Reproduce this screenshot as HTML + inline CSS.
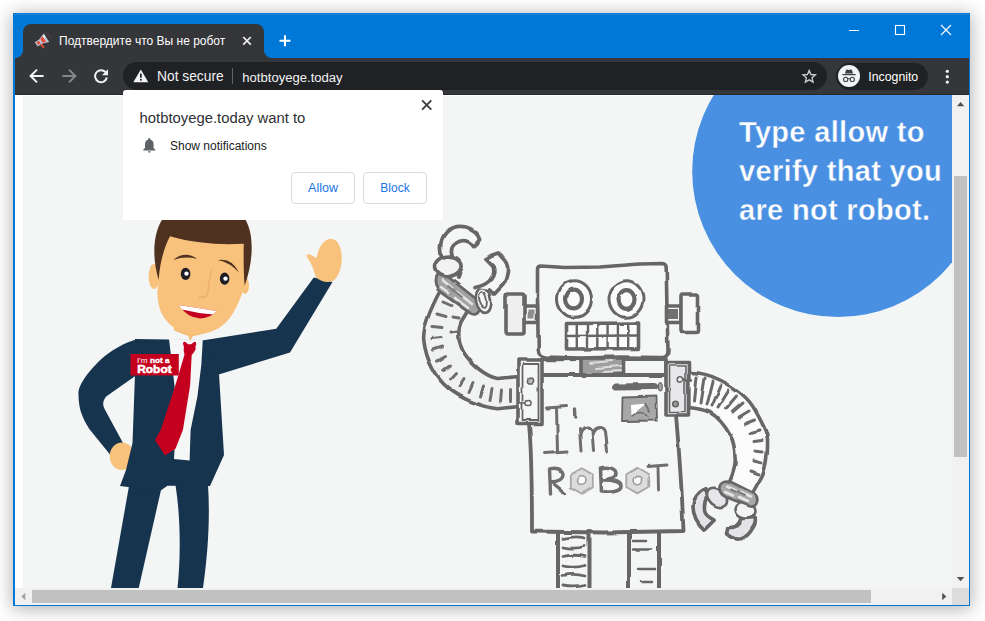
<!DOCTYPE html>
<html>
<head>
<meta charset="utf-8">
<title>Notification prompt</title>
<style>
html,body{margin:0;padding:0;}
body{width:985px;height:621px;background:#fff;overflow:hidden;position:relative;font-family:"Liberation Sans",sans-serif;}
.abs{position:absolute;}
#win{position:absolute;left:13px;top:13px;width:957px;height:593px;background:#0078d7;box-shadow:0 2px 17px 1px rgba(0,0,0,0.31);}
#tab{position:absolute;left:23px;top:24px;width:241px;height:34px;background:#35363a;border-radius:8px 8px 0 0;}
#tabL{position:absolute;left:15px;top:50px;width:8px;height:8px;background:radial-gradient(circle at 0 0,rgba(53,54,58,0) 7.5px,#35363a 8.5px);}
#tabR{position:absolute;left:264px;top:50px;width:8px;height:8px;background:radial-gradient(circle at 100% 0,rgba(53,54,58,0) 7.5px,#35363a 8.5px);}
#tabtitle{position:absolute;left:59px;top:33.3px;font-size:12px;line-height:16px;color:#fff;white-space:nowrap;transform-origin:0 50%;}
#toolbar{position:absolute;left:15px;top:58px;width:954px;height:37px;background:#35363a;box-sizing:border-box;border-bottom:1px solid #27282b;}
#omni{position:absolute;left:123px;top:62px;width:704px;height:28px;border-radius:14px;background:#202124;}
#chip{position:absolute;left:836px;top:62.5px;width:91.5px;height:27px;border-radius:13.5px;background:#202124;}
#page{position:absolute;left:15px;top:95px;width:937px;height:493px;background:#fff;overflow:hidden;}
#pagebg{position:absolute;left:8px;top:1px;width:929px;height:492px;background:#f4f6f6;}
#vscroll{position:absolute;left:952px;top:95px;width:17px;height:493px;background:#f1f1f1;}
#hscroll{position:absolute;left:15px;top:588px;width:937px;height:17px;background:#f1f1f1;}
#corner{position:absolute;left:952px;top:588px;width:17px;height:17px;background:#dcdcdc;}
#dlg{position:absolute;left:123px;top:90px;width:320px;height:129.5px;background:#fff;border-radius:3px 3px 0 0;box-shadow:0 0 1px rgba(0,0,0,0.08);}
.btn{position:absolute;top:172px;height:30px;width:62px;border:1px solid #dadce0;border-radius:4px;box-sizing:border-box;background:#fff;color:#1a73e8;font-size:13px;line-height:28px;text-align:center;}
</style>
</head>
<body>
<div id="win"></div>
<div class="abs" style="left:14px;top:14px;width:955px;height:1px;background:#1a84db;"></div>
<div id="tab"></div><div id="tabL"></div><div id="tabR"></div>
<div id="tabtitle">Подтвердите что Вы не робот</div>
<div id="toolbar"></div>
<div id="omni"></div>
<div id="chip"></div>
<div id="page"><div id="pagebg"></div>
<!--SCENE-->
<svg class="abs" style="left:0;top:0" width="937" height="493" viewBox="15 95 937 493">
  <!-- blue circle -->
  <circle cx="838" cy="171.3" r="145.8" fill="#4a90e2"/>
  <!-- MAN -->
  <g id="man">
    <!-- raised hand -->
    <!-- legs -->
    <path d="M129,486 L161,490 L138.75,588 L111,588 Z" fill="#17344f"/>
    <path d="M175.5,485 C181,520 180.5,560 177.5,588 L203,588 C208.5,550 210,515 208,485 Z" fill="#17344f"/>
    <!-- left arm -->
    <path d="M138,339 C125,342 110,351 101.4,359 C94,366 88,373 84.5,378.3 C80,385 78,390 78.5,395.2 C78.5,401 79.5,407 80.9,412 C83,418 86,424 89.3,429 L109.8,454.3 L123,443 L105,409.7 C103.5,407 103,404.5 103.3,402.4 C103.8,400 104.8,398 106.2,396.4 L136,375.5 Z" fill="#17344f"/>
    <!-- hip hand -->
    <ellipse cx="122" cy="456.2" rx="12.3" ry="13.8" fill="#f8c27c"/>
    <!-- body / jacket -->
    <path d="M135,339 L203,340 L219,374 L224,455 L210,486 L167.5,485.75 L160,491 L120,486 L126,470 L132.5,443 L135,374 Z" fill="#17344f"/>
    <!-- right arm -->
    <path d="M202,340.5 L276.25,328.75 L313.75,277.5 L332.5,282 L290,352.5 L218.75,374.5 Z" fill="#17344f"/>
    <path d="M331,238.8 C338,239 342,248 341.8,258.8 C341.6,268 338.5,277 333.5,280.5 C329,283.3 321,282 315.8,277 C314,271 312,264 306.8,256.8 C306,254.2 308.5,253.6 311,255 C313.5,256.2 315,257.5 316.4,258.3 C318,250 322,239.5 331,238.8 Z" fill="#f8c27c"/>
    <!-- shirt -->
    <path d="M169,339 L202.8,339.5 L201.3,365 L197.5,396 L190.6,430 L189.6,460.5 L174,459 L176,420 L174.5,385.5 Z" fill="#f5f6f6"/>
    <!-- neck -->
    <path d="M173.5,325 L203,325 L200.8,334.5 L192.6,336.2 L190.2,341.5 L188.4,335.9 L174.4,330.8 Z" fill="#f6bd76"/>
    <!-- tie -->
    <path d="M185,353 L175.3,385.5 L160.7,430 L155,440 L165,455.5 L175.5,448.75 L182.9,430 L190.1,385.5 L191.8,353 Z" fill="#c5001f"/>
    <path d="M183,344 Q182.8,341.3 185.5,342 L188,344.3 L191.3,344.3 L194,342 Q196.5,341.3 196.2,344.5 Q194.8,347 195.8,349 Q194.5,351.5 192.3,354.5 L184.6,354.5 Q183.3,351 183.8,348.5 Q184.5,346.5 183,344 Z" fill="#c5001f"/>
    <!-- badge -->
    <rect x="130.5" y="354" width="48.3" height="21.5" fill="#c5001f"/>
    <text x="137" y="362.7" font-family="Liberation Sans" font-size="7" fill="#fff" textLength="32.5" lengthAdjust="spacingAndGlyphs">I'm <tspan font-weight="bold" stroke="#fff" stroke-width="0.35">not a</tspan></text>
    <text x="137.2" y="372.6" font-family="Liberation Sans" font-size="10" font-weight="bold" fill="#fff" stroke="#fff" stroke-width="0.5" textLength="34.5" lengthAdjust="spacingAndGlyphs">Robot</text>
    <!-- ears -->
    <ellipse cx="154" cy="276.5" rx="5.4" ry="12.5" fill="#f8c27c"/>
    <ellipse cx="245" cy="285.5" rx="4" ry="8.5" fill="#f8c27c"/>
    <!-- hair -->
    <path d="M158.75,280 C153,262 151.5,236 162.5,219 L245,219 C254.5,234 253.5,262 244.5,286 L240,250 L170,240 Z" fill="#4f311f"/>
    <!-- face -->
    <path d="M170,236.3 C195,243.5 220,245 243.75,243.75 C243.5,258 243.6,272 244.5,285 L243.6,289 C241.5,296 238,304 234.5,310.5 C230,319 224,325.5 216,329.6 C210,332.5 205,334 200.8,334.3 C195,334.6 190,334 186,332.8 C181,331.3 177,329.5 173.4,327.3 C167,322.5 163,317 160.5,311 C158.5,305 157.5,299 157.3,292 L158.75,279 C160,262 164,248 170,236.3 Z" fill="#f8c27c"/>
    <!-- eyebrows -->
    <path d="M173.3,259.9 Q185,250.3 197.2,258.9 Q185.3,255.6 173.3,259.9 Z" fill="#4f311f"/>
    <path d="M217.8,260.1 Q232,257.5 239,272.8 Q230.5,262.8 217.8,260.1 Z" fill="#4f311f"/>
    <!-- eyes -->
    <ellipse cx="185.6" cy="273.9" rx="4.8" ry="6.1" fill="#1d1d26"/><circle cx="186.5" cy="273.6" r="2.2" fill="#fff"/>
    <ellipse cx="224.6" cy="278.7" rx="4.8" ry="6.1" fill="#1d1d26"/><circle cx="225.5" cy="278.6" r="2.2" fill="#fff"/>
    <!-- nose -->
    <path d="M211.2,270.6 Q208.5,283 207.8,293.5 Q206.5,298.5 199.3,297" stroke="#efb06b" stroke-width="1.5" fill="none" stroke-linecap="round"/>
    <!-- mouth -->
    <path d="M178.9,305 L216.8,311 Q211,318 200,318.4 Q187.5,318 178.9,305 Z" fill="#c5001f"/>
    <path d="M178.9,305 L216.8,311 L213,314.4 Q197,313.3 182,309.5 Z" fill="#ffffff"/>
  </g>
  <!--ROBOT-->
  <defs><filter id="sk" x="-5%" y="-5%" width="110%" height="110%"><feTurbulence type="fractalNoise" baseFrequency="0.045" numOctaves="2" seed="7" result="n"/><feDisplacementMap in="SourceGraphic" in2="n" scale="3.2" xChannelSelector="R" yChannelSelector="G" result="d"/><feGaussianBlur in="d" stdDeviation="0.35"/></filter></defs>
  <g id="robot" filter="url(#sk)" fill="#f5f6f6" stroke="#666666" stroke-width="3.6" stroke-linejoin="round" stroke-linecap="round">
    <!-- left raised arm tube -->
    <path d="M440,291 C430,310 422.5,328 423.75,340 C426,362 438,380 447.5,387.5 C460,398 480,407 497.5,408.75 L519,406.5 L519,376.5 L497.5,378.5 C485,376 472,365 463.75,352.5 C458,342 457.5,330 461,322 L470,307 Z" fill="#f0f1f1"/>
    <g stroke-width="3" fill="none" stroke="#6e6e6e">
      <path d="M443,302 l8,3.5 M437,314 l9,2.5 M433,326.5 l9,1 M432,338.5 l9,-1 M433.5,350 l9,-3 M437.5,361 l8,-4.5 M443.5,370.5 l7,-5.5 M450.5,379 l6,-6.5 M459,386.5 l5,-8 M469,392.5 l4,-9 M479.5,397 l3,-10 M490,400.5 l2,-11 M500.5,402 l1,-11 M510.5,401.5 l0,-11"/>
      <path d="M459,318 l-6,-1 M457,331 l-6,1"/>
    </g>
    <!-- wrist band -->
    <path d="M435.5,277 C434,283 436,289 441,292.5 L470,313 C474,316 478,314 479.5,310 C481,305 479,301 475,298 L447,276 C443,273 437,273 435.5,277 Z" fill="#a2a2a2" stroke-width="2.8"/>
    <path d="M443,280.5 L452,288 M457,292 L472,304 M441,287 L449,293 M455,298 L468,308" stroke="#e4e4e4" stroke-width="2.6" fill="none"/><path d="M448,286 L462,297" stroke="#7c7c7c" stroke-width="2" fill="none"/>
    <!-- ring -->
    <ellipse cx="483.5" cy="300.5" rx="7.5" ry="12.5" transform="rotate(-12 483.5 300.5)" fill="#f5f6f6" stroke-width="2.6"/>
    <ellipse cx="483" cy="300" rx="3.6" ry="8" transform="rotate(-12 483 300)" fill="#f5f6f6" stroke-width="1.8"/>
    <!-- claw C -->
    <path d="M442,258 C439,248 440.5,238 447,231.5 C452,227 459,225.5 466,227 C473,229 478,233 479.6,238.6 L473.5,246.5 C470,241.5 465,240 460.5,241 C454,243 451,247.5 451.5,252 C452.5,260 458,267 459.5,273 L458,277" fill="#f5f6f6" stroke-width="3.8"/>
    <!-- knuckle -->
    <ellipse cx="447.8" cy="266.4" rx="13.4" ry="10.2" transform="rotate(-8 447.8 266.4)" fill="#f2f2f2"/>
    <!-- claw prong 2 -->
    <path d="M475,287.5 C482,286 488,283 490.5,279.5 C494,275 494.5,270 493,266.5 L485.6,259 L491,255.5 L498.2,253 L503,258.5 C506.5,262 508,266 507.6,270 C507,276 505.5,280 503,284 L493.5,294 L489.5,290" fill="#f5f6f6" stroke-width="3.8"/>
    <!-- neck/shoulder bar -->
    <path d="M541,359.5 L666,359 L666,375 L541,375 Z"/>
    <path d="M581,358 L623.5,358 L623.5,375 L581,375 Z" fill="#9e9e9e"/>
    <path d="M590,363 L612,361 M596,368 L621,366 M603,372 L621,371" stroke="#dcdcdc" stroke-width="2" fill="none"/>
    <!-- body -->
    <path d="M528,375 L678,375 L676,415 C679,450 682,490 683.5,531 L604,532.5 L532,531.5 C532,495 532,455 529,424 Z" stroke-width="3.8"/>
    <!-- head -->
    <path d="M537.5,269.5 Q537.5,266 541,266 L565,267.5 L600,267 L640,264 L662,263.5 Q666,263.5 666.2,267.5 L667,310 L668,351 Q668,357.5 662,357.5 L620,357 L580,358 L546,357 Q538.5,356.5 538.3,350 L537.5,300 Z"/>
    <!-- ears -->
    <path d="M523.5,306 L537.5,306 L537.5,322.5 L523.5,322.5 Z"/>
    <rect x="527.5" y="309.5" width="7" height="9" fill="#8c8c8c" stroke="none"/>
    <path d="M507.5,294 Q506,294 506,296 L506,331 Q506,334 508,334 L522,334 Q524,334 524,332 L524,296 Q524,294 522,294 Z" fill="#efefef"/>
    <path d="M666.5,306 L681,306 L681,322.5 L666.5,322.5 Z"/>
    <rect x="668" y="309" width="10" height="10" fill="#707070" stroke="none"/>
    <path d="M682.5,294 Q681,294 681,296 L681,330.5 Q681,332.5 683,332.5 L695.5,332.5 Q697.5,332.5 697.5,330.5 L697.5,296 Q697.5,294 695.5,294 Z" fill="#f7f7f7"/>
    <!-- eyes -->
    <ellipse cx="574.5" cy="299" rx="17" ry="18.3" fill="#fbfbfb" stroke-width="3"/>
    <ellipse cx="574" cy="299" rx="8" ry="9.3" fill="#fbfbfb" stroke-width="4.2"/>
    <ellipse cx="626" cy="299" rx="17" ry="18.3" fill="#fbfbfb" stroke-width="3"/>
    <ellipse cx="626.5" cy="299.5" rx="8" ry="9.3" fill="#fbfbfb" stroke-width="4.2"/>
    <!-- mouth -->
    <path d="M566.5,323.5 L638.5,323 L638.5,348.5 L566.5,349 Z" fill="#fbfbfb"/>
    <path d="M566.5,336 L638.5,335.5 M576.8,323.5 V349 M587,323.5 V349 M597.3,323.5 V349 M607.6,323.5 V349 M617.9,323.5 V349 M628.2,323.5 V349" stroke-width="2.4" fill="none"/>
    <!-- brackets -->
    <path d="M518,360 L542,360 L542,423.5 L518,423.5 Z"/>
    <path d="M522.5,364 L538.5,364 L538.5,420 L522.5,420 Z" stroke-width="1.8"/>
    <circle cx="531" cy="380.5" r="2.6" fill="#bdbdbd" stroke-width="1.5"/>
    <circle cx="528.5" cy="403" r="2.6" fill="#f5f6f6" stroke-width="1.5"/>
    <path d="M519,403 L526,403" stroke-width="1.6"/>
    <!-- right arm tube -->
    <path d="M688.75,372.5 C700,372 712,376 720,380 C738,389 749,399 755,410 C763,424 768,434 767.5,442 C768,455 766,465 762.5,475 L752.5,493 L722,490 L730,480 C734,470 736,462 735,457.5 C735,448 733,440 730,435 C724,424 716,416 710,412.5 C702,409 695,408 688.75,407.5 Z" fill="#fbfbfb"/>
    <g stroke-width="3" fill="none" stroke="#6a6a6a">
      <path d="M697,377 l-2.5,24 M705,378 l-4,25 M713,381 l-6,24 M721,385 l-9,21 M729,390 l-11,18 M736.5,396 l-11,13 M743,403 l-10.5,9 M749,411 l-10,6 M754.5,420 l-10,4 M759,430 l-9,2.5 M762,440.5 l-8,1 M763,452 l-8,-1 M762,463 l-8,-2 M759,474 l-8,-3"/>
    </g>
    <path d="M666,362.5 L688.5,362.5 L688.5,415 L666,415 Z" fill="#e8e8ec"/>
    <path d="M669.5,366 L685,366 L685,411.5 L669.5,411.5 Z" fill="#e8e8ec" stroke-width="1.6"/>
    <circle cx="680" cy="380.5" r="2.8" fill="#f5f6f6" stroke-width="1.6"/>
    <circle cx="676.5" cy="403" r="2.8" fill="#9a9a9a" stroke-width="1.6"/>
    <path d="M683,380.5 L692,380.5" stroke-width="2.4"/>
    <!-- right hand -->
    <path d="M706,488.7 C698,492 693,499 693,506.5 C693,516 698,524 704.6,529.8 L714.2,520.2 C708,517 704.8,514 704.6,510.6 C704,505 705,500 707.5,496 Z" fill="#e4e4e8"/>
    <path d="M741.6,518.8 L755.2,517.5 C756,522 755,525 752.5,528.4 C750,533 746,537 741.6,538.7 C736,540 730,537 726.5,533.9 L727.9,527.7 C731,527.8 735,527 737.5,525.7 C740,523.5 741.5,521.5 741.6,518.8 Z" fill="#e4e4e8"/>
    <ellipse cx="717" cy="497.5" rx="11.5" ry="8" transform="rotate(42 717 497.5)" fill="#e6e6ea" stroke-width="2.6"/>
    <ellipse cx="745.5" cy="510.5" rx="10" ry="8" transform="rotate(10 745.5 510.5)" fill="#f3f3f3" stroke-width="2.6"/>
    <path d="M724,481 C720,482 719,486 719.5,489 C720,493 723,496 727,497.5 L749,506 C753,507.5 756,506 757,502 C758,498 757,495 753,493 L731,482 C728,480.5 726,480.5 724,481 Z" fill="#a8a8a8" stroke-width="2.8"/>
    <path d="M727,486.5 L736,490.5 M741,493 L751,497.5 M725,492 L733,495.5 M739,498 L748,502" stroke="#e6e6e6" stroke-width="2.6" fill="none"/><path d="M731,489.5 L745,496" stroke="#7c7c7c" stroke-width="2" fill="none"/>
    <!-- legs -->
    <path d="M558,532 L558,589 M589.5,532 L589.5,589 M629,532 L629,589 M659,532 L659,589" fill="none" stroke-width="4"/>
    <path d="M563,538.5 Q574,535.5 585,538 M563,547 Q574,549.5 585,546.5 M563,556.5 Q574,554 585,556.5 M563,566 Q574,568.5 585,565.5 M563,575.5 Q574,573 585,576 M563,585 Q574,587 585,584.5" fill="none" stroke-width="2.8"/>
    <path d="M633,541 L646,541 M633,549.5 L652,549.5 M639,569 L655,569 M641,582 L652,582" fill="none" stroke-width="2.6"/>
    <!-- battery bar -->
    <path d="M615.5,387 L653,386.5" stroke-width="7" stroke="#6a6a6a" fill="none"/>
    <path d="M648,386.5 L659,386.5" stroke-width="3.4" stroke="#6a6a6a" fill="none"/>
    <ellipse cx="659.3" cy="386.8" rx="1.9" ry="4" fill="#a8a8a8" stroke-width="1.2"/>
    <!-- image box -->
    <path d="M622.5,397.5 L656.5,396.5 L657,420.5 L622,421 Z" fill="#a7a7a7" stroke-width="1.8"/>
    <path d="M631,405 L646,403.5 L631.5,415.5 Z" fill="#ffffff" stroke="none"/>
    <path d="M645,403.5 L650,412 M632,416 Q640,409 648,416" stroke="#6a6a6a" stroke-width="1.6" fill="none"/>
    <!-- I'm -->
    <g fill="none" stroke="#6e6e6e" stroke-width="3">
      <path d="M546.5,408 L566.5,406.5 M556.5,407.5 L557.5,452.5 M544.5,453.5 L567,452"/>
      <path d="M575.5,410 L575.8,417" stroke-width="3.4"/>
      <path d="M579.5,428.5 L581,451 M580,434 C583,427 590,426.5 592,431 L593.5,450.5 M592.5,433 C596,426 603.5,426 605.5,431.5 L607.5,451"/>
      <!-- ROBOT -->
      <path d="M549.5,469 L550.5,494 M549.5,469 C556,467 563,469 563,474.5 C563,480 556,482 551,481.5 L565.5,493.5" stroke-width="3.4"/>
      <path d="M600.5,468 L601.5,492 M600.5,468 C608,466 616,468.5 616,473.5 C616,478 609,480 603,480 C611,479.5 621,481.5 621,486.5 C621,491.5 610,493 601.5,492" stroke-width="3.6"/>
      <path d="M648,466.5 L667,465 M658,466 L658.5,490" stroke-width="2.9"/>
    </g>
    <path d="M581.8,468.2 L592.8,474.6 L592.8,487.4 L581.8,493.8 L570.8,487.4 L570.8,474.6 Z" fill="#dcdcdc" stroke="#a8a8a8" stroke-width="1.8"/>
    <circle cx="581.8" cy="481" r="4.2" fill="#fbfbfb" stroke="#9c9c9c" stroke-width="1.6"/>
    <path d="M637.3,467.8 L648.3,474.2 L648.3,487 L637.3,493.4 L626.3,487 L626.3,474.2 Z" fill="#dcdcdc" stroke="#a8a8a8" stroke-width="1.8"/>
    <circle cx="637.3" cy="480.6" r="4.2" fill="#fbfbfb" stroke="#9c9c9c" stroke-width="1.6"/>
  </g>
<!--/ROBOT-->
</svg>
<div class="abs" id="ctext" style="left:724px;top:18.1px;color:#fff;font-weight:bold;font-size:29px;line-height:39px;white-space:nowrap;letter-spacing:0.32px;-webkit-text-stroke:0.4px #4a90e2;">Type allow to<br>verify that you<br>are not robot.</div>
<!--/SCENE-->
</div>
<div id="vscroll"></div>
<div id="hscroll"></div>
<div id="corner"></div>
<div class="abs" style="left:954px;top:176px;width:13px;height:281px;background:#c1c1c1;"></div>
<div class="abs" style="left:32px;top:590px;width:839px;height:13px;background:#c1c1c1;"></div>
<svg class="abs" style="left:0;top:95px" width="985" height="515" viewBox="0 95 985 515">
  <path d="M956.9,106.2 L960.6,102 L964.3,106.2 Z" fill="#505050"/>
  <path d="M956.9,577 L964.3,577 L960.6,581.2 Z" fill="#505050"/>
  <path d="M942.2,592.8 L946.3,596.5 L942.2,600.2 Z" fill="#505050"/>
  <path d="M25.4,592.8 L21.3,596.5 L25.4,600.2 Z" fill="#a3a3a3"/>
</svg>
<!--CHROMEICONS-->
<svg class="abs" style="left:0;top:0" width="985" height="100" viewBox="0 0 985 100">
  <!-- favicon megaphone -->
  <g transform="translate(42.6,40.2) rotate(-33)">
    <path d="M-7.6,-2.6 L-2.5,-2.6 L4.6,-5 L4.6,5 L-2.5,2.6 L-7.6,2.6 Z" fill="#bcc8d2"/>
    <rect x="-6.3" y="-1.5" width="2.9" height="3" fill="#ea4d3d"/>
    <path d="M-1.3,-2.2 L2.1,-3.4 L2.1,3.4 L-1.3,2.2 Z" fill="#ea4d3d"/>
    <circle cx="3.4" cy="-2.3" r="1.1" fill="#f4f6f8"/>
    <path d="M-4.6,2.6 L-2.6,2.6 L-2,7 L-4,7 Z" fill="#ea4d3d"/>
    <path d="M6.4,-4.2 A5.5,5.5 0 0 1 6.4,4.2" fill="none" stroke="#9c4a3c" stroke-width="0.7" stroke-dasharray="1.2 1"/>
  </g>
  <!-- tab close -->
  <path d="M243.2,37 L250.8,44.6 M250.8,37 L243.2,44.6" stroke="#f1f1f1" stroke-width="1.7" fill="none"/>
  <!-- new tab plus -->
  <path d="M279.5,40.7 H290.5 M285,35.2 V46.2" stroke="#fff" stroke-width="2.1" fill="none"/>
  <!-- window controls -->
  <path d="M849,30.5 H859" stroke="#fff" stroke-width="1"/>
  <rect x="895.5" y="25.5" width="9" height="9" fill="none" stroke="#fff" stroke-width="1.1"/>
  <path d="M941,25 L951,35 M951,25 L941,35" stroke="#fff" stroke-width="1.1" fill="none"/>
  <!-- back -->
  <path d="M43.6,76 H31.4 M37,69.6 L30.6,76 L37,82.4" stroke="#f1f3f4" stroke-width="2" fill="none"/>
  <!-- forward -->
  <path d="M62.4,76 H74.6 M69,69.6 L75.4,76 L69,82.4" stroke="#86888b" stroke-width="2" fill="none"/>
  <!-- reload -->
  <path d="M105.6,72.2 A6,6 0 1 0 106.9,77.6" stroke="#f1f3f4" stroke-width="2" fill="none"/>
  <path d="M108,69.2 V75.2 H102 Z" fill="#f1f3f4"/>
  <!-- warning -->
  <path d="M140.8,69.4 L148.3,82.3 H133.3 Z" fill="#f1f3f4"/>
  <rect x="140" y="73.6" width="1.7" height="4.2" fill="#202124"/>
  <rect x="140" y="78.9" width="1.7" height="1.7" fill="#202124"/>
  <!-- separator -->
  <rect x="232" y="68" width="1" height="16" fill="#5f6368"/>
  <!-- star -->
  <path d="M809.2,70.4 L810.95,74.5 L815.4,74.9 L812.05,77.85 L813.05,82.2 L809.2,79.9 L805.35,82.2 L806.35,77.85 L803,74.9 L807.45,74.5 Z" fill="none" stroke="#c9ccd0" stroke-width="1.35" stroke-linejoin="miter"/>
  <!-- incognito avatar -->
  <circle cx="849" cy="76" r="11" fill="#f1f3f4"/>
  <path d="M844.9,73.6 L846.1,69.9 Q846.4,69.2 847.2,69.5 L849,70.1 L850.8,69.5 Q851.6,69.2 851.9,69.9 L853.1,73.6 Z" fill="#3c4043"/>
  <rect x="842.3" y="74" width="13.4" height="1.2" fill="#3c4043"/>
  <circle cx="845.7" cy="79.4" r="2.1" fill="none" stroke="#3c4043" stroke-width="1.1"/>
  <circle cx="852.3" cy="79.4" r="2.1" fill="none" stroke="#3c4043" stroke-width="1.1"/>
  <path d="M847.8,79 Q849,78.3 850.2,79" stroke="#3c4043" stroke-width="1" fill="none"/>
  <!-- menu dots -->
  <circle cx="947.3" cy="71.3" r="1.6" fill="#f1f3f4"/>
  <circle cx="947.3" cy="76.7" r="1.6" fill="#f1f3f4"/>
  <circle cx="947.3" cy="82.1" r="1.6" fill="#f1f3f4"/>
</svg>
<div class="abs" style="left:157px;top:68.2px;font-size:13.8px;line-height:18px;color:#f1f3f4;white-space:nowrap;">Not secure</div>
<div class="abs" style="left:242.3px;top:68.6px;font-size:13.08px;line-height:18px;color:#f1f3f4;white-space:nowrap;">hotbtoyege.today</div>
<div class="abs" style="left:868.3px;top:67.5px;font-size:12.3px;line-height:18px;color:#fff;white-space:nowrap;">Incognito</div>
<!--/CHROMEICONS-->
<div id="dlg"></div>
<!--DLGCONTENT-->
<div class="abs" style="left:139.5px;top:109px;font-size:14.85px;line-height:18px;color:#2e3033;white-space:nowrap;">hotbtoyege.today want to</div>
<div class="abs" style="left:170px;top:138px;font-size:12px;line-height:16px;color:#202124;white-space:nowrap;">Show notifications</div>
<svg class="abs" style="left:120px;top:90px" width="330" height="135" viewBox="120 90 330 135">
  <!-- close -->
  <path d="M422.1,100.4 L431.3,109.6 M431.3,100.4 L422.1,109.6" stroke="#3c4043" stroke-width="2" fill="none"/>
  <!-- bell -->
  <path d="M149.3,137.9 Q150.3,137.9 150.3,138.9 L150.3,139.6 Q153.6,140.6 153.6,144.4 L153.6,148 L155.4,149.8 L155.4,150.6 L143.2,150.6 L143.2,149.8 L145,148 L145,144.4 Q145,140.6 148.3,139.6 L148.3,138.9 Q148.3,137.9 149.3,137.9 Z" fill="#5f6368"/>
  <path d="M147.8,151.3 H150.8 Q150.6,152.7 149.3,152.7 Q148,152.7 147.8,151.3 Z" fill="#5f6368"/>
</svg>
<div class="btn" style="left:291px;width:64px;height:32px;line-height:30px;font-size:12.5px;">Allow</div>
<div class="btn" style="left:363px;width:64px;height:32px;line-height:30px;font-size:12px;">Block</div>
<!--/DLGCONTENT-->
</body>
</html>
